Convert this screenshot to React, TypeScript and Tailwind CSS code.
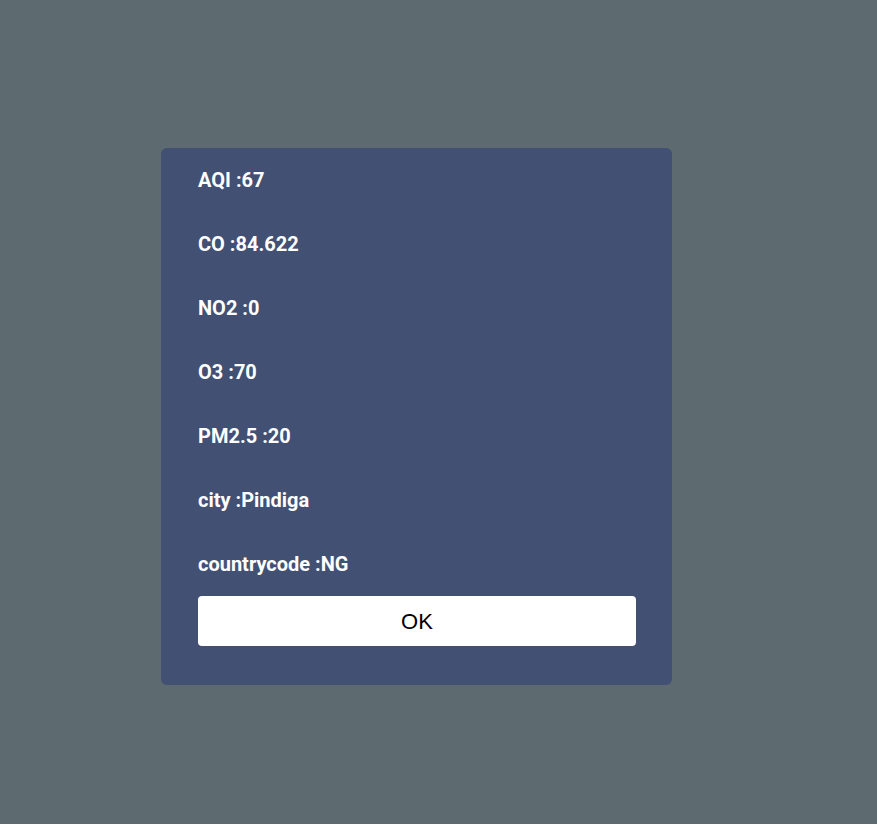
import React from 'react';

const readings = [
  { label: 'AQI', value: '67' },
  { label: 'CO', value: '84.622' },
  { label: 'NO2', value: '0' },
  { label: 'O3', value: '70' },
  { label: 'PM2.5', value: '20' },
  { label: 'city', value: 'Pindiga' },
  { label: 'countrycode', value: 'NG' },
];

export default function App() {
  return (
    <div className="min-h-screen w-full bg-[#5d6b71] pt-[148px] pl-[161px]">
      <div className="w-[511px] rounded-md bg-[#415073] pl-[37px] pr-[36px] pt-[21px] pb-[39px]">
        <div className="flex flex-col gap-[41px]">
          {readings.map((r) => (
            <p
              key={r.label}
              className="h-[23px] text-[20px] leading-[23px] font-bold text-white"
              style={{ fontFamily: 'Roboto, "Noto Sans", sans-serif' }}
            >
              {r.label} :{r.value}
            </p>
          ))}
        </div>
        <button
          className="mt-[20px] flex h-[50px] w-full items-center justify-center rounded-[4px] bg-white text-[22px] text-black"
          style={{ fontFamily: '"Liberation Sans", Arial, sans-serif' }}
        >
          OK
        </button>
      </div>
    </div>
  );
}
